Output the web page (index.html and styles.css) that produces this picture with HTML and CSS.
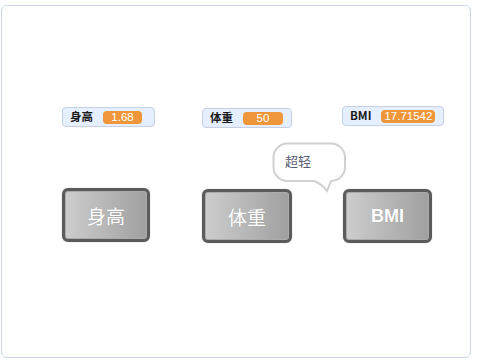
FILE: index.html
```html
<!DOCTYPE html>
<html>
<head>
<meta charset="utf-8">
<link rel="stylesheet" href="styles.css">
</head>
<body>
<div class="stage">
  <div class="monitor m-height"><span class="label">身高</span><span class="value">1.68</span></div>
  <div class="monitor m-weight"><span class="label">体重</span><span class="value">50</span></div>
  <div class="monitor m-bmi"><span class="label">BMI</span><span class="value">17.71542</span></div>

  <div class="bubble">
    <svg class="bubble-shape" width="76" height="52" viewBox="0 0 76 52">
      <path d="M15,1.5 H59 A14,14 0 0 1 73,15.5 V25 A14,14 0 0 1 59,39 Q57,44 55,49 Q50,42 42,39 H15 A14,14 0 0 1 1.5,25 V15.5 A14,14 0 0 1 15,1.5 Z" fill="#fff" stroke="#d0d0d0" stroke-width="2"/>
    </svg>
    <span class="bubble-text">超轻</span>
  </div>

  <div class="sprite-btn b-height">身高</div>
  <div class="sprite-btn b-weight">体重</div>
  <div class="sprite-btn b-bmi">BMI</div>
</div>
</body>
</html>
```

FILE: styles.css
```css
html, body {
  margin: 0;
  padding: 0;
  background: #fff;
}
body {
  font-family: "Noto Sans CJK SC", "Noto Sans", sans-serif;
}
.stage {
  position: relative;
  margin: 5px 0 0 1px;
  width: 468px;
  height: 351px;
  border: 1px solid #cbd5e8;
  border-radius: 6px;
  background: #fff;
  overflow: hidden;
}
.monitor {
  position: absolute;
  display: flex;
  align-items: center;
  gap: 10px;
  height: 20px;
  padding: 0 9px 0 7px;
  background: #e6efff;
  border: 1px solid #c5d0e2;
  border-radius: 4px;
  box-sizing: border-box;
  white-space: nowrap;
}
.monitor .label {
  flex: none;
  font-size: 11.5px;
  font-weight: bold;
  color: #1a1a1a;
  line-height: 1;
}
.monitor .value {
  flex: none;
  display: inline-block;
  min-width: 39px;
  box-sizing: border-box;
  padding: 0 4px;
  height: 13px;
  line-height: 13px;
  background: #f0963a;
  color: #fff;
  font-family: "Liberation Sans", Arial, sans-serif;
  font-size: 11.5px;
  text-align: center;
  border-radius: 4px;
}
.m-height { left: 60px; top: 101px; width: 93px; }
.m-weight { left: 200px; top: 102px; width: 90px; }
.m-weight .value { min-width: 40px; }
.m-bmi { left: 340px; top: 100px; width: 102px; }
.m-bmi .value { padding: 0 3px; }

.bubble {
  position: absolute;
  left: 270px;
  top: 136px;
  width: 76px;
  height: 52px;
}
.bubble-shape {
  position: absolute;
  left: 0;
  top: 0;
}
.bubble-text {
  position: absolute;
  left: 13px;
  top: 10px;
  font-size: 13px;
  color: #575e75;
  line-height: 18px;
}

.sprite-btn {
  position: absolute;
  width: 88px;
  height: 54px;
  box-sizing: border-box;
  border: 3px solid #5b5b5b;
  border-radius: 6px;
  background: linear-gradient(to right, #cdcdcd, #a0a0a0);
  box-shadow: inset 0 0 0 1px #ababab, 0 0 1px #888;
  display: flex;
  align-items: center;
  justify-content: center;
  color: #fff;
  font-size: 19px;
  text-shadow: 0 0 1px rgba(0,0,0,0.15);
}
.b-height { left: 60px; top: 182px; }
.b-weight { left: 200px; top: 183px; width: 90px; }
.b-bmi { left: 341px; top: 183px; width: 89px; font-family: "Liberation Sans", Arial, sans-serif; font-weight: bold; font-size: 18px; }
```
